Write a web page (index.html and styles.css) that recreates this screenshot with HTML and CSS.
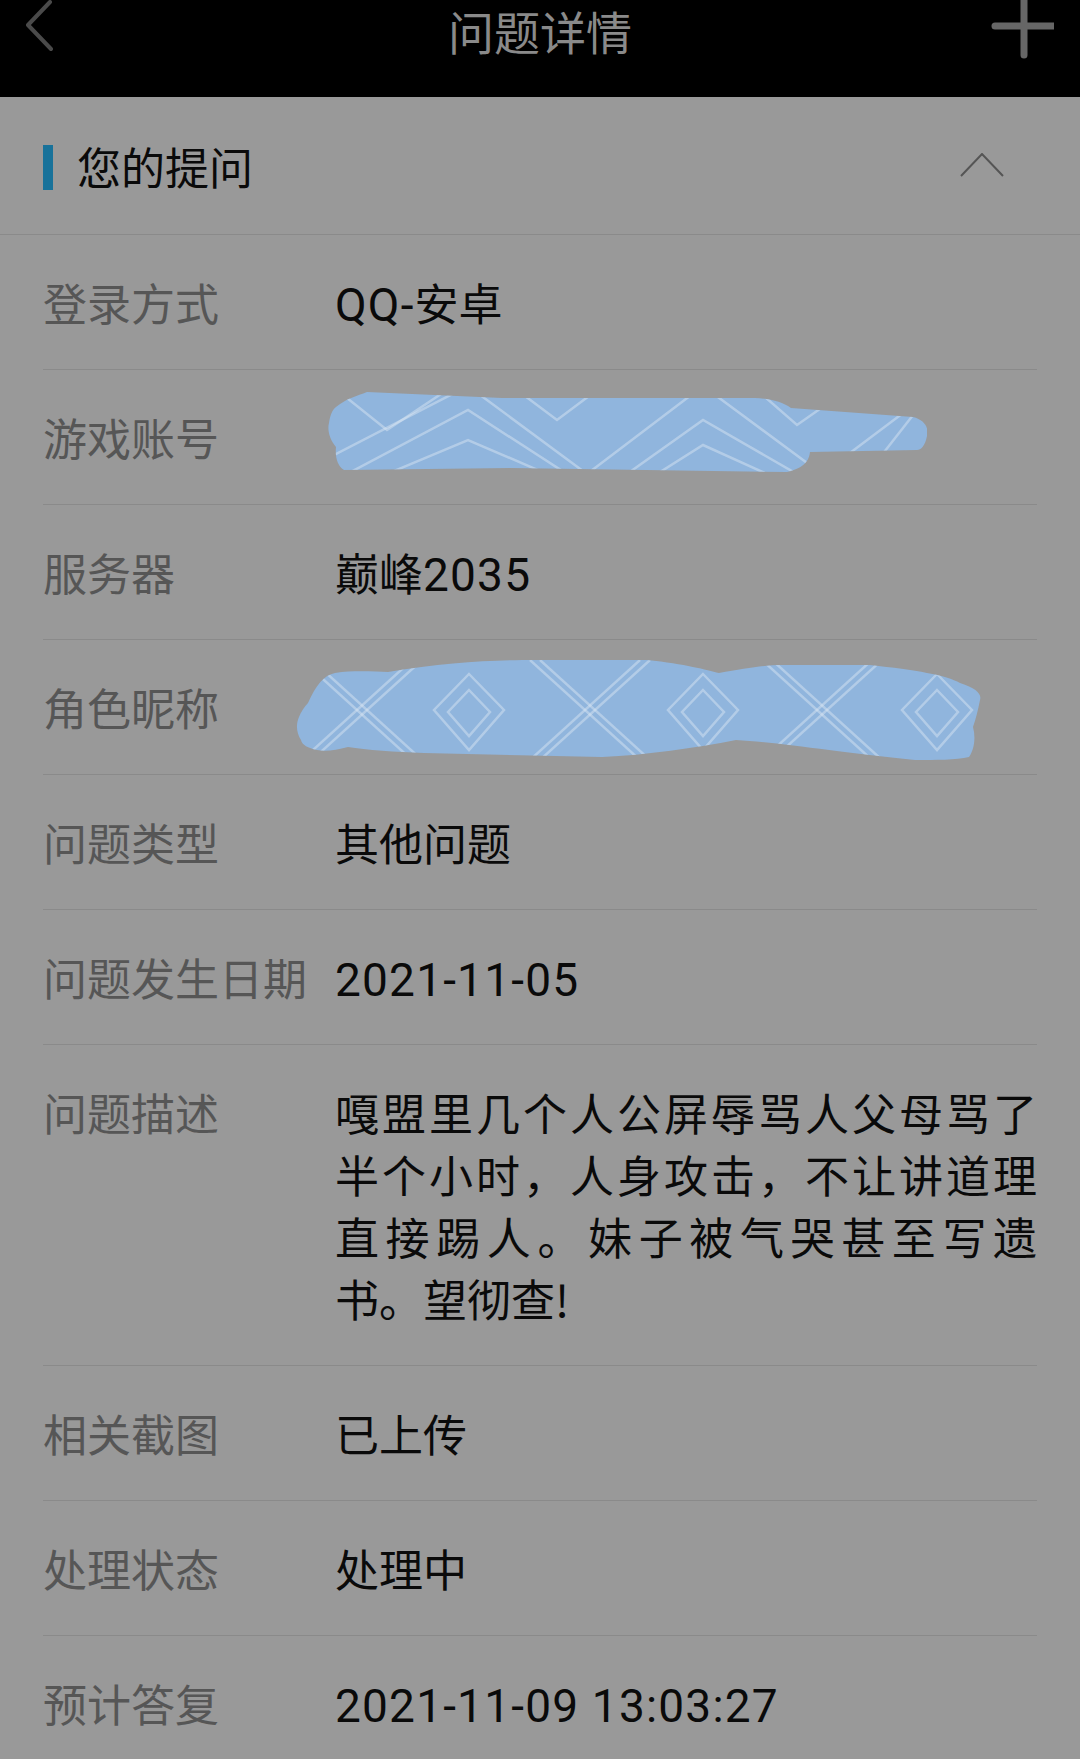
FILE: index.html
```html
<!DOCTYPE html>
<html lang="zh-CN">
<head>
  <meta charset="UTF-8">
  <title>问题详情</title>
  <link rel="stylesheet" href="styles.css">
</head>
<body>

<header class="topbar">
  <svg class="back" width="80" height="56" viewBox="0 0 80 56">
    <polyline points="50,2 28,25 51,49" fill="none" stroke="#4a4a4a" stroke-width="4" stroke-linecap="round" stroke-linejoin="round"/>
  </svg>
  <h1>问题详情</h1>
  <svg class="plus" width="80" height="60" viewBox="0 0 80 60">
    <line x1="50" y1="-4" x2="50" y2="55" stroke="#666" stroke-width="7" stroke-linecap="round"/>
    <line x1="21" y1="26" x2="79" y2="26" stroke="#666" stroke-width="7" stroke-linecap="round"/>
  </svg>
</header>

<section class="panel">
  <div class="panel-head">
    <span class="bar"></span>
    <h2>您的提问</h2>
    <svg class="fold" width="44" height="24" viewBox="0 0 44 24">
      <polyline points="1,23 22,1 43,23" fill="none" stroke="#555" stroke-width="2"/>
    </svg>
  </div>

  <div class="rows">
    <div class="row">
      <div class="label">登录方式</div>
      <div class="value"><span class="num">QQ-</span>安卓</div>
    </div>
    <div class="row">
      <div class="label">游戏账号</div>
      <div class="value">
        <svg class="scribble scribble-a" width="600" height="84" viewBox="0 0 600 84">
          <defs>
            <clipPath id="clipA">
              <path d="M9 17 C20 8 30 6 40 2 L175 8 L428 8 C445 9 455 12 464 18 L586 27 C598 30 602 38 600 46 C598 56 594 60 590 60 L483 62 C482 70 478 78 460 82 L183 78 L17 80 C10 76 8 66 9 57 C3 50 0 40 2 33 C3 26 5 20 9 17 Z"/>
            </clipPath>
          </defs>
          <path d="M9 17 C20 8 30 6 40 2 L175 8 L428 8 C445 9 455 12 464 18 L586 27 C598 30 602 38 600 46 C598 56 594 60 590 60 L483 62 C482 70 478 78 460 82 L183 78 L17 80 C10 76 8 66 9 57 C3 50 0 40 2 33 C3 26 5 20 9 17 Z" fill="#90b5dd"/>
          <g clip-path="url(#clipA)" fill="none" stroke="#dde8f4" stroke-opacity="0.45" stroke-width="2.5">
            <polyline points="-30,84 141,-4 260,84 376,-4 495,84 612,-4"/>
            <polyline points="20,84 141,20 240,84"/>
            <polyline points="60,84 141,50 220,84"/>
            <polyline points="300,84 376,30 470,84"/>
            <polyline points="330,84 376,55 440,84"/>
            <polyline points="10,0 60,40 120,0"/>
            <polyline points="190,0 230,30 270,0"/>
            <polyline points="430,0 470,35 520,0"/>
            <polyline points="540,84 590,20"/>
          </g>
        </svg>
      </div>
    </div>
    <div class="row">
      <div class="label">服务器</div>
      <div class="value">巅峰<span class="num">2035</span></div>
    </div>
    <div class="row">
      <div class="label">角色昵称</div>
      <div class="value">
        <svg class="scribble scribble-b" width="686" height="100" viewBox="0 0 686 100">
          <defs>
            <clipPath id="clipB">
              <path d="M12 43 C20 25 28 15 39 13 C60 10 80 12 92 12 C150 2 200 0 240 0 L351 0 C390 4 410 10 423 13 C450 8 470 5 485 5 L574 5 C620 10 650 15 664 23 C680 28 686 34 684 40 C682 50 680 58 677 67 C680 78 678 90 673 97 C660 100 640 100 619 100 C540 92 480 82 440 80 C400 88 350 95 306 97 L128 93 C100 92 70 90 52 87 C40 90 30 92 21 90 C12 88 6 85 5 80 C0 72 0 64 3 57 C5 52 8 47 12 43 Z"/>
            </clipPath>
          </defs>
          <path d="M12 43 C20 25 28 15 39 13 C60 10 80 12 92 12 C150 2 200 0 240 0 L351 0 C390 4 410 10 423 13 C450 8 470 5 485 5 L574 5 C620 10 650 15 664 23 C680 28 686 34 684 40 C682 50 680 58 677 67 C680 78 678 90 673 97 C660 100 640 100 619 100 C540 92 480 82 440 80 C400 88 350 95 306 97 L128 93 C100 92 70 90 52 87 C40 90 30 92 21 90 C12 88 6 85 5 80 C0 72 0 64 3 57 C5 52 8 47 12 43 Z" fill="#90b5dd"/>
          <g clip-path="url(#clipB)" fill="none" stroke="#dde8f4" stroke-opacity="0.45" stroke-width="2.5">
            <line x1="6" y1="0" x2="116" y2="100"/>
            <line x1="116" y1="0" x2="6" y2="100"/>
            <line x1="16" y1="0" x2="126" y2="100"/>
            <line x1="126" y1="0" x2="16" y2="100"/>
            <line x1="234" y1="0" x2="344" y2="100"/>
            <line x1="344" y1="0" x2="234" y2="100"/>
            <line x1="244" y1="0" x2="354" y2="100"/>
            <line x1="354" y1="0" x2="244" y2="100"/>
            <line x1="466" y1="0" x2="576" y2="100"/>
            <line x1="576" y1="0" x2="466" y2="100"/>
            <line x1="476" y1="0" x2="586" y2="100"/>
            <line x1="586" y1="0" x2="476" y2="100"/>
            <polygon points="173,14 208,50 173,90 138,50"/>
            <polygon points="173,30 194,52 173,76 152,52"/>
            <polygon points="407,14 442,50 407,90 372,50"/>
            <polygon points="407,30 428,52 407,76 386,52"/>
            <polygon points="641,14 676,50 641,90 606,50"/>
            <polygon points="641,30 662,52 641,76 620,52"/>
          </g>
        </svg>
      </div>
    </div>
    <div class="row">
      <div class="label">问题类型</div>
      <div class="value">其他问题</div>
    </div>
    <div class="row">
      <div class="label">问题发生日期</div>
      <div class="value"><span class="num">2021-11-05</span></div>
    </div>
    <div class="row">
      <div class="label">问题描述</div>
      <div class="value desc">嘎盟里几个人公屏辱骂人父母骂了半个小时，人身攻击，不让讲道理直接踢人。妹子被气哭甚至写遗书。望彻查!</div>
    </div>
    <div class="row">
      <div class="label">相关截图</div>
      <div class="value">已上传</div>
    </div>
    <div class="row">
      <div class="label">处理状态</div>
      <div class="value">处理中</div>
    </div>
    <div class="row">
      <div class="label">预计答复</div>
      <div class="value"><span class="num">2021-11-09 13:03:27</span></div>
    </div>
  </div>
</section>

</body>
</html>
```

FILE: styles.css
```css
body {
  margin: 0;
  background: #999;
  font-family: "Noto Sans CJK SC", "Noto Sans", sans-serif;
  color: #0a0a0a;
  overflow: hidden;
}
.topbar {
  height: 97px;
  background: #000;
  display: grid;
  grid-template-columns: 1fr auto 1fr;
  align-items: start;
}
.topbar h1 {
  margin: 0;
  padding-top: 2px;
  font-size: 46px;
  font-weight: normal;
  line-height: 56px;
  color: #8a8a8a;
}
.topbar .plus {
  justify-self: end;
  margin-right: 26px;
}
.panel-head {
  height: 137px;
  border-bottom: 1px solid #8a8a8a;
  display: flex;
  align-items: center;
  padding: 0 76px 0 43px;
}
.panel-head .bar {
  width: 10px;
  height: 45px;
  background: #18729a;
  margin-top: 3px;
}
.panel-head h2 {
  margin: 0 0 0 24px;
  font-size: 44px;
  font-weight: normal;
  line-height: 62px;
  flex: 1;
}
.panel-head .fold {
  margin-top: -2px;
}
.rows {
  margin: 0 43px;
}
.row {
  display: grid;
  grid-template-columns: 292px 1fr;
  padding: 36px 0;
  border-bottom: 1px solid #8a8a8a;
  font-size: 44px;
  line-height: 62px;
}
.label {
  color: #565656;
  white-space: nowrap;
}
.value {
  color: #0a0a0a;
  height: auto;
}
.num {
  font-family: Roboto, "Noto Sans", sans-serif;
  font-size: 46px;
  line-height: 40px;
  letter-spacing: 1.2px;
}
.desc {
  text-align: justify;
}
.scribble {
  display: block;
}
.scribble-a {
  margin: -16px 0 -6px -8px;
}
.scribble-b {
  margin: -16px 0 -22px -39px;
}
```
